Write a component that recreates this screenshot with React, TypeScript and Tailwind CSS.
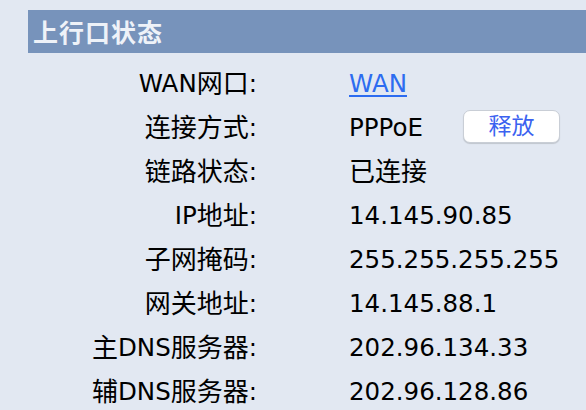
const rows: { label: string; value: string }[] = [
  { label: 'WAN网口:', value: 'WAN' },
  { label: '连接方式:', value: 'PPPoE' },
  { label: '链路状态:', value: '已连接' },
  { label: 'IP地址:', value: '14.145.90.85' },
  { label: '子网掩码:', value: '255.255.255.255' },
  { label: '网关地址:', value: '14.145.88.1' },
  { label: '主DNS服务器:', value: '202.96.134.33' },
  { label: '辅DNS服务器:', value: '202.96.128.86' },
];

// CJK glyphs in the reference run a touch larger than the Latin ones
function Mixed({ text }: { text: string }) {
  return (
    <>
      {text.split(/([\u4e00-\u9fff]+)/).map((part, i) =>
        /[\u4e00-\u9fff]/.test(part) ? (
          <span key={i} className="text-[26px]">{part}</span>
        ) : (
          part
        )
      )}
    </>
  );
}

export default function App() {
  return (
    <div className="w-[586px] h-[410px] overflow-hidden bg-[#e2e8f2] pt-[10px] pl-[28px] font-['DejaVu_Sans','Noto_Sans_CJK_SC',sans-serif] text-black">
      <div className="h-[43px] bg-[#7793bb] flex items-center pl-[5px]">
        <h2 className="text-[25px] font-bold text-[#eef2f8] tracking-[1px] font-['Noto_Sans_CJK_SC',sans-serif]">上行口状态</h2>
      </div>

      <div className="mt-[9px] grid grid-cols-[229px_1fr] text-[24.5px]">
        {rows.map((row, i) => (
          <div key={row.label} className="contents">
            <div className="h-[44px] flex items-center justify-end whitespace-nowrap">
              <Mixed text={row.label} />
            </div>
            <div className="h-[44px] flex items-center pl-[92px] whitespace-nowrap">
              {i === 0 ? (
                <a href="#" className="text-[#2d6cf0] underline underline-offset-[3px] decoration-2">
                  {row.value}
                </a>
              ) : i === 1 ? (
                <>
                  <span className="w-[114px]">{row.value}</span>
                  <button className="w-[97px] h-[33px] -mt-[3px] rounded-[7px] bg-white border border-[#c9ced6] shadow-[0_1px_1px_rgba(0,0,0,0.15)] text-[23px] text-[#3b62f0] flex items-center justify-center">
                    释放
                  </button>
                </>
              ) : (
                <span>
                  <Mixed text={row.value} />
                </span>
              )}
            </div>
          </div>
        ))}
      </div>
    </div>
  );
}
